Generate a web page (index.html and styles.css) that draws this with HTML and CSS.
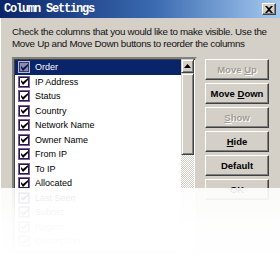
FILE: index.html
```html
<!DOCTYPE html>
<html lang="en">
<head>
    <meta charset="UTF-8">
    <title>Column Settings</title>
    <link rel="stylesheet" href="styles.css">
</head>
<body>
    <div class="window">
        <div class="titlebar">
            <span class="title">Column Settings</span>
            <span class="close">
                <svg width="8" height="7" viewBox="0 0 8 7"><path d="M0 0h2l2 2 2-2h2L5 3.5 8 7H6L4 5 2 7H0l3-3.5z" fill="#000"/></svg>
            </span>
        </div>
        <div class="body">
            <p class="intro">Check the columns that you would like to make visible. Use the Move Up and Move Down buttons to reorder the columns</p>
            <div class="main">
                <div class="listbox">
                    <ul class="items">
                        <li class="item selected"><span class="check"><svg width="7" height="7" viewBox="0 0 7 7"><path d="M0 2l2 2 5-4v2L2 7 0 4z" fill="#0a1a50"/></svg></span>Order</li>
                        <li class="item"><span class="check"><svg width="7" height="7" viewBox="0 0 7 7"><path d="M0 2l2 2 5-4v2L2 7 0 4z"/></svg></span>IP Address</li>
                        <li class="item"><span class="check"><svg width="7" height="7" viewBox="0 0 7 7"><path d="M0 2l2 2 5-4v2L2 7 0 4z"/></svg></span>Status</li>
                        <li class="item"><span class="check"><svg width="7" height="7" viewBox="0 0 7 7"><path d="M0 2l2 2 5-4v2L2 7 0 4z"/></svg></span>Country</li>
                        <li class="item"><span class="check"><svg width="7" height="7" viewBox="0 0 7 7"><path d="M0 2l2 2 5-4v2L2 7 0 4z"/></svg></span>Network Name</li>
                        <li class="item"><span class="check"><svg width="7" height="7" viewBox="0 0 7 7"><path d="M0 2l2 2 5-4v2L2 7 0 4z"/></svg></span>Owner Name</li>
                        <li class="item"><span class="check"><svg width="7" height="7" viewBox="0 0 7 7"><path d="M0 2l2 2 5-4v2L2 7 0 4z"/></svg></span>From IP</li>
                        <li class="item"><span class="check"><svg width="7" height="7" viewBox="0 0 7 7"><path d="M0 2l2 2 5-4v2L2 7 0 4z"/></svg></span>To IP</li>
                        <li class="item"><span class="check"><svg width="7" height="7" viewBox="0 0 7 7"><path d="M0 2l2 2 5-4v2L2 7 0 4z"/></svg></span>Allocated</li>
                        <li class="item"><span class="check"><svg width="7" height="7" viewBox="0 0 7 7"><path d="M0 2l2 2 5-4v2L2 7 0 4z"/></svg></span>Last Seen</li>
                        <li class="item"><span class="check"><svg width="7" height="7" viewBox="0 0 7 7"><path d="M0 2l2 2 5-4v2L2 7 0 4z"/></svg></span>Subnet</li>
                        <li class="item"><span class="check"><svg width="7" height="7" viewBox="0 0 7 7"><path d="M0 2l2 2 5-4v2L2 7 0 4z"/></svg></span>Region</li>
                        <li class="item"><span class="check"><svg width="7" height="7" viewBox="0 0 7 7"><path d="M0 2l2 2 5-4v2L2 7 0 4z"/></svg></span>Description</li>
                    </ul>
                    <div class="scrollbar">
                        <div class="arrow">
                            <svg width="7" height="4" viewBox="0 0 7 4"><path d="M3.5 0L7 4H0z" fill="#000"/></svg>
                        </div>
                        <div class="thumb"></div>
                        <div class="track"></div>
                    </div>
                </div>
                <div class="buttons">
                    <button class="btn" disabled>Move <u>U</u>p</button>
                    <button class="btn">Move <u>D</u>own</button>
                    <button class="btn" disabled><u>S</u>how</button>
                    <button class="btn"><u>H</u>ide</button>
                    <button class="btn">Default</button>
                    <button class="btn">OK</button>
                </div>
            </div>
        </div>
        <div class="fade"></div>
    </div>
</body>
</html>
```

FILE: styles.css
```css
body {
    margin: 0;
    padding: 0;
    background-color: #fff;
    font-family: "Liberation Sans", Arial, sans-serif;
    font-size: 9px;
    color: #000;
}
.window {
    position: relative;
    width: 280px;
    height: 270px;
    overflow: hidden;
    background-color: #d4d0c8;
    box-shadow: inset 1px 0 #fff;
}
.titlebar {
    display: flex;
    align-items: center;
    justify-content: space-between;
    height: 18px;
    padding: 0 4px 0 4px;
    background: linear-gradient(to right, #0a246a, #3a6ab0 55%, #a6caf0);
}
.title {
    font-family: "Liberation Mono", "Courier New", monospace;
    font-weight: bold;
    font-size: 12px;
    letter-spacing: -1.2px;
    color: #fff;
}
.close {
    display: flex;
    align-items: center;
    justify-content: center;
    width: 12px;
    height: 10px;
    background-color: #d4d0c8;
    border: 1px solid;
    border-color: #fff #404040 #404040 #fff;
    box-shadow: inset -1px -1px #808080;
}
.body {
    padding: 8px 11px 0 12px;
}
.intro {
    margin: 0 -11px 7px 0;
    font-size: 9.8px;
    letter-spacing: -0.3px;
    line-height: 12px;
    color: #111;
}
.main {
    display: flex;
    gap: 8px;
}
.listbox {
    display: flex;
    width: 181px;
    height: 190px;
    background-color: #fff;
    border: 2px solid;
    border-color: #808080 #d4d0c8 #d4d0c8 #808080;
    box-shadow: inset 1px 1px #404040;
}
.items {
    flex: 1;
    list-style: none;
    margin: 0;
    padding: 1px 0 0 1px;
}
.item {
    display: flex;
    align-items: center;
    gap: 5px;
    height: 14.5px;
    padding-left: 3px;
    white-space: nowrap;
}
.item.selected {
    background-color: #0a246a;
    color: #fff;
}
.check {
    display: flex;
    align-items: center;
    justify-content: center;
    box-sizing: border-box;
    width: 12px;
    height: 12px;
    background-color: #fff;
    border: 1px solid #7b5c9c;
    box-shadow: inset 0 0 0 1px #2b1a3e;
}
.selected .check {
    background-color: #8c8cae;
    border-color: #b8b8d0;
    box-shadow: inset 0 0 0 1px #3a3a66;
}
.scrollbar {
    display: flex;
    flex-direction: column;
    width: 13px;
    margin: 0 1px 0 0;
}
.arrow, .thumb {
    box-sizing: border-box;
    background-color: #d4d0c8;
    border: 1px solid;
    border-color: #d4d0c8 #404040 #404040 #d4d0c8;
    box-shadow: inset 1px 1px #fff, inset -1px -1px #808080;
}
.arrow {
    display: flex;
    align-items: center;
    justify-content: center;
    height: 14px;
}
.thumb {
    height: 82px;
}
.track {
    flex: 1;
    background: repeating-conic-gradient(#d4d0c8 0 25%, #fff 0 50%) 0 0 / 2px 2px;
}
.buttons {
    display: flex;
    flex-direction: column;
    gap: 3px;
    width: 64px;
    margin-top: 2px;
}
.btn {
    height: 21px;
    padding: 0;
    font-family: "Liberation Sans", Arial, sans-serif;
    font-size: 9.5px;
    font-weight: bold;
    color: #000;
    background-color: #d4d0c8;
    border: 1px solid;
    border-color: #fff #404040 #404040 #fff;
    box-shadow: inset -1px -1px #808080;
}
.btn:disabled {
    color: #a09c94;
    text-shadow: 1px 1px #fff;
}
.fade {
    position: absolute;
    left: 0;
    right: 0;
    top: 188px;
    bottom: 0;
    background: linear-gradient(to bottom, rgba(255, 255, 255, 0.9), rgba(255, 255, 255, 0.97) 40%, #fff);
}
```
